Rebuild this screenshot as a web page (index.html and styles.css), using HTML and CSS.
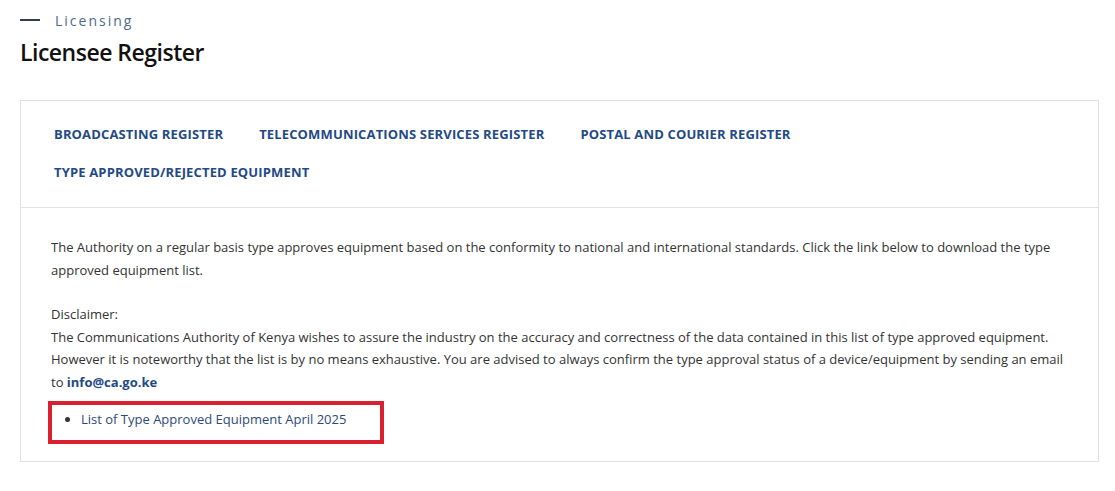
FILE: index.html
```html
<!DOCTYPE html>
<html lang="en">
<head>
<meta charset="utf-8">
<title>Licensee Register</title>
<link rel="stylesheet" href="styles.css">
</head>
<body>
<div class="page">
  <div class="eyebrow"><span class="dash"></span><span class="eyebrow-text">Licensing</span></div>
  <h1 class="title">Licensee Register</h1>
  <div class="card">
    <nav class="tabs">
      <a class="tab" href="#">Broadcasting Register</a>
      <a class="tab" href="#">Telecommunications Services Register</a>
      <a class="tab" href="#">Postal and Courier Register</a>
      <a class="tab" href="#">Type Approved/Rejected Equipment</a>
    </nav>
    <div class="content">
      <p class="para">The Authority on a regular basis type approves equipment based on the conformity to national and international standards. Click the link below to download the type approved equipment list.</p>
      <p class="para">Disclaimer:<br>The Communications Authority of Kenya wishes to assure the industry on the accuracy and correctness of the data contained in this list of type approved equipment. However it is noteworthy that the list is by no means exhaustive. You are advised to always confirm the type approval status of a device/equipment by sending an email to <a class="email" href="#">info@ca.go.ke</a></p>
      <div class="highlight">
        <ul class="files">
          <li><a class="file-link" href="#">List of Type Approved Equipment April 2025</a></li>
        </ul>
      </div>
    </div>
  </div>
</div>
</body>
</html>
```
FILE: styles.css
```css
html, body {
  margin: 0;
  padding: 0;
  background: #ffffff;
}
body {
  font-family: "Open Sans", "Noto Sans", sans-serif;
  color: #333333;
}
.page {
  padding: 10px 16px 0 20px;
}
.eyebrow {
  display: flex;
  align-items: center;
  height: 20px;
}
.dash {
  width: 20px;
  height: 2px;
  background: #2c3e50;
  margin-right: 15px;
}
.eyebrow-text {
  font-size: 14px;
  letter-spacing: 2px;
  color: #4d6a8e;
}
.title {
  margin: 6px 0 0 0;
  font-size: 23px;
  line-height: 32px;
  font-weight: 600;
  letter-spacing: -0.5px;
  color: #111111;
}
.card {
  margin-top: 32px;
  border: 1px solid #e1e1e1;
}
.tabs {
  display: flex;
  flex-wrap: wrap;
  column-gap: 36px;
  padding: 14px 80px 16px 33px;
  border-bottom: 1px solid #e1e1e1;
}
.tab {
  display: block;
  padding: 10px 0;
  line-height: 18px;
  font-size: 13px;
  font-weight: 700;
  letter-spacing: 0.15px;
  text-transform: uppercase;
  color: #1f4a85;
  text-decoration: none;
}
.content {
  padding: 28px 30px 17px 30px;
}
.para {
  margin: 0 0 22px 0;
  font-size: 13px;
  line-height: 22.5px;
  color: #333333;
}
.para:nth-of-type(2) {
  margin-bottom: 8px;
}
.email {
  font-weight: 700;
  color: #1f4a85;
  text-decoration: none;
}
.highlight {
  box-sizing: border-box;
  width: 336px;
  margin-left: -3px;
  border: 4px solid #d9202e;
  padding: 3px 0 9px 0;
}
.files {
  margin: 0;
  padding-left: 29px;
  font-size: 13px;
  line-height: 23px;
}
.file-link {
  color: #2c4a78;
  text-decoration: none;
}
```
